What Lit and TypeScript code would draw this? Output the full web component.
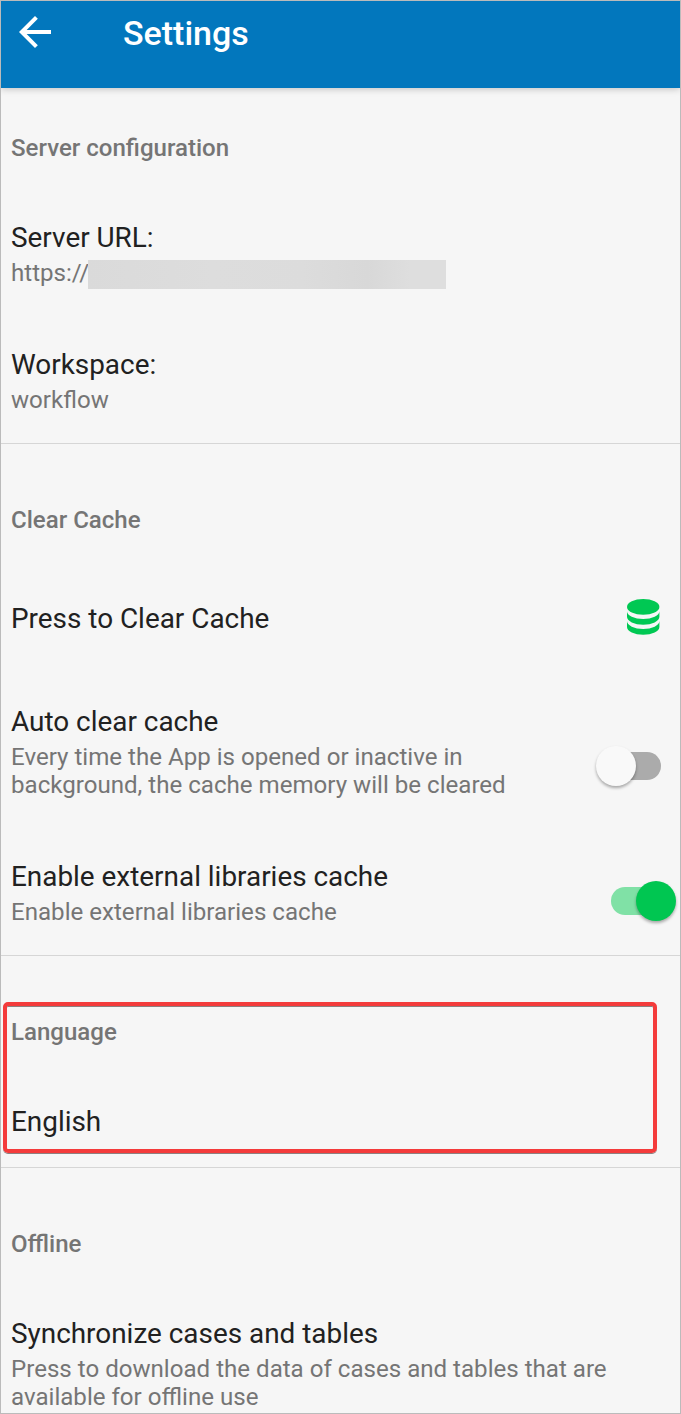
import { LitElement, html, css, nothing } from "lit";
import { customElement, property } from "lit/decorators.js";

@customElement("toggle-switch")
class ToggleSwitch extends LitElement {
  @property({ type: Boolean, reflect: true }) on = false;

  static styles = css`
    :host {
      display: block;
      flex: none;
      width: 70px;
      height: 50px;
    }
    svg {
      display: block;
      overflow: visible;
    }
    .thumb {
      filter: drop-shadow(0 2px 1.5px rgba(0, 0, 0, 0.32));
    }
  `;

  render() {
    return html`
      <svg width="70" height="50" viewBox="0 0 70 50">
        <rect x=${this.on ? 2 : 6} y="11" width="59" height="28" rx="14" fill=${this.on ? "#80e1a6" : "#ababab"} />
        <circle class="thumb" cx=${this.on ? 47 : 20} cy="25" r="20" fill=${this.on ? "#00c651" : "#f9f9f9"} />
      </svg>
    `;
  }
}

@customElement("settings-row")
class SettingsRow extends LitElement {
  @property() label = "";
  @property() summary = "";

  static styles = css`
    :host {
      display: flex;
      align-items: center;
      box-sizing: border-box;
      padding: 32px 0 29px 10px;
    }
    .text {
      flex: 1;
      min-width: 0;
    }
    .label {
      font-size: 27.9px;
      line-height: 33px;
      color: #212121;
    }
    .summary {
      display: flex;
      margin-top: 5px;
      font-size: 24.1px;
      line-height: 28px;
      color: #757575;
      white-space: pre-line;
    }
  `;

  render() {
    return html`
      <div class="text">
        <div class="label">${this.label}</div>
        ${this.summary
          ? html`<div class="summary">${this.summary}<slot name="summary-end"></slot></div>`
          : nothing}
      </div>
      <slot name="action"></slot>
    `;
  }
}

@customElement("app-root")
class AppRoot extends LitElement {
  static styles = css`
    :host {
      display: block;
      box-sizing: border-box;
      width: 681px;
      height: 1414px;
      overflow: hidden;
      border: 1px solid #bbbbbb;
      background: #f6f6f6;
      font-family: Roboto, "Liberation Sans", sans-serif;
    }
    .bar {
      display: flex;
      align-items: flex-start;
      box-sizing: border-box;
      height: 87px;
      padding: 7px 0 0 10px;
      background: #0277bd;
      box-shadow: 0 1px 7px rgba(0, 0, 0, 0.22);
    }
    .bar svg {
      flex: none;
      fill: #fff;
    }
    h1 {
      margin: 5px 0 0 64px;
      font-size: 34px;
      line-height: 40px;
      font-weight: 500;
      color: #fff;
    }
    section {
      padding-top: 62px;
      border-bottom: 1px solid #d6d6d6;
    }
    .first {
      padding-top: 46px;
    }
    .last {
      border-bottom: 0;
    }
    h2 {
      margin: 0 0 27px 10px;
      font-size: 24.05px;
      line-height: 28px;
      font-weight: 500;
      color: #757575;
    }
    .redacted {
      width: 358px;
      height: 29px;
      margin: 1px 0 -2px -1px;
      background: linear-gradient(90deg, #dadada, #dddddd 35%, #dcdcdc 60%, #d8d8d8 78%, #dedede 90%);
    }
    .tall {
      height: 112px;
      padding: 38px 20px 35px 10px;
    }
    .database {
      fill: #00c853;
      margin-top: -3px;
    }
    .off {
      margin: 28px 14px 0 0;
    }
    .on {
      margin: 16px 1px 0 0;
    }
    .focus {
      position: relative;
    }
    .highlight {
      position: absolute;
      left: 2px;
      top: 46px;
      width: 654px;
      height: 151px;
      box-sizing: border-box;
      border: 4px solid #f43b3b;
      border-radius: 5px;
      box-shadow: 0 1px 0 #8d8080, inset 0 1px 0 #8d8080;
    }
  `;

  render() {
    return html`
      <header class="bar">
        <svg width="48" height="48" viewBox="0 0 24 24">
          <path d="M20 11H7.83l5.59-5.59L12 4l-8 8 8 8 1.41-1.41L7.83 13H20z" />
        </svg>
        <h1>Settings</h1>
      </header>
      <section class="first">
        <h2>Server configuration</h2>
        <settings-row label="Server URL:" summary="https://">
          <div class="redacted" slot="summary-end"></div>
        </settings-row>
        <settings-row label="Workspace:" summary="workflow"></settings-row>
      </section>
      <section>
        <h2>Clear Cache</h2>
        <settings-row class="tall" label="Press to Clear Cache">
          <svg slot="action" class="database" width="33" height="36" viewBox="0 0 33 36">
            <ellipse cx="16.2" cy="7.9" rx="16.2" ry="7.9" />
            <path d="M0 12.200A16.200 7.900 0 0 0 32.400 12.200V17.800A16.200 7.900 0 0 1 0 17.800Z" />
            <path d="M0 22.100A16.200 7.900 0 0 0 32.400 22.100V27.900A16.200 7.900 0 0 1 0 27.900Z" />
          </svg>
        </settings-row>
        <settings-row
          label="Auto clear cache"
          .summary=${"Every time the App is opened or inactive in\nbackground, the cache memory will be cleared"}
        >
          <toggle-switch slot="action" class="off"></toggle-switch>
        </settings-row>
        <settings-row label="Enable external libraries cache" summary="Enable external libraries cache">
          <toggle-switch slot="action" class="on" on></toggle-switch>
        </settings-row>
      </section>
      <section class="focus">
        <h2>Language</h2>
        <settings-row label="English"></settings-row>
        <div class="highlight"></div>
      </section>
      <section class="last">
        <h2>Offline</h2>
        <settings-row
          label="Synchronize cases and tables"
          .summary=${"Press to download the data of cases and tables that are\navailable for offline use"}
        ></settings-row>
      </section>
    `;
  }
}
